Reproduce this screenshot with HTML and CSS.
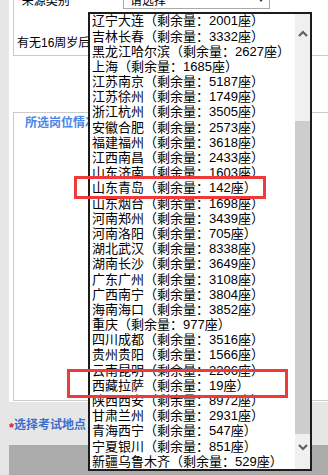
FILE: index.html
```html
<!DOCTYPE html>
<html lang="zh-CN">
<head>
  <meta charset="UTF-8" />
  <meta name="viewport" content="width=device-width, initial-scale=1.0"/>
  <title>报名 - 选择考试地点</title>
  <link rel="stylesheet" href="styles.css">
</head>
<body>

  <div class="page">
    <div class="form-area">
      <div class="panel panel-basic">
        <div class="row-source">
          <span class="label"><i class="req">*</i>来源类别</span>
          <div class="fake-select">
            <span>请选择</span>
            <svg class="caret" width="6" height="4" viewBox="0 0 6 4"><polygon points="0,0 6,0 3,4" fill="#333"/></svg>
          </div>
        </div>
        <div class="row-age">有无16周岁后</div>
      </div>

      <div class="panel panel-post">
        <div class="panel-title">所选岗位情况</div>
      </div>
    </div>

    <div class="section-title"><i class="req">*</i>选择考试地点</div>
    <div class="gray-block"></div>
  </div>

  <!-- opened dropdown of exam cities -->
  <div class="city-list">
    <div class="city-items">
      <div class="city-items-inner">
        <div class="city">辽宁大连（剩余量：2001座）</div>
        <div class="city">吉林长春（剩余量：3332座）</div>
        <div class="city">黑龙江哈尔滨（剩余量：2627座）</div>
        <div class="city">上海（剩余量：1685座）</div>
        <div class="city">江苏南京（剩余量：5187座）</div>
        <div class="city">江苏徐州（剩余量：1749座）</div>
        <div class="city">浙江杭州（剩余量：3505座）</div>
        <div class="city">安徽合肥（剩余量：2573座）</div>
        <div class="city">福建福州（剩余量：3618座）</div>
        <div class="city">江西南昌（剩余量：2433座）</div>
        <div class="city">山东济南（剩余量：1603座）</div>
        <div class="city">山东青岛（剩余量：142座）</div>
        <div class="city">山东烟台（剩余量：1698座）</div>
        <div class="city">河南郑州（剩余量：3439座）</div>
        <div class="city">河南洛阳（剩余量：705座）</div>
        <div class="city">湖北武汉（剩余量：8338座）</div>
        <div class="city">湖南长沙（剩余量：3649座）</div>
        <div class="city">广东广州（剩余量：3108座）</div>
        <div class="city">广西南宁（剩余量：3804座）</div>
        <div class="city">海南海口（剩余量：3852座）</div>
        <div class="city">重庆（剩余量：977座）</div>
        <div class="city">四川成都（剩余量：3516座）</div>
        <div class="city">贵州贵阳（剩余量：1566座）</div>
        <div class="city">云南昆明（剩余量：2206座）</div>
        <div class="city">西藏拉萨（剩余量：19座）</div>
        <div class="city">陕西西安（剩余量：8972座）</div>
        <div class="city">甘肃兰州（剩余量：2931座）</div>
        <div class="city">青海西宁（剩余量：547座）</div>
        <div class="city">宁夏银川（剩余量：851座）</div>
        <div class="city">新疆乌鲁木齐（剩余量：529座）</div>
      </div>
    </div>
    <div class="scrollbar">
      <div class="sb-up">
        <svg width="10" height="7" viewBox="0 0 10 7"><polyline points="1,6 5,2 9,6" fill="none" stroke="#606060" stroke-width="2.2"/></svg>
      </div>
      <div class="sb-gap"></div>
      <div class="sb-thumb"></div>
      <div class="sb-down">
        <svg width="10" height="7" viewBox="0 0 10 7"><polyline points="1,1 5,5 9,1" fill="none" stroke="#606060" stroke-width="2.2"/></svg>
      </div>
    </div>
  </div>

  <!-- red highlight marks -->
  <div class="mark mark-qingdao"></div>
  <div class="mark mark-lasa"></div>

</body>
</html>
```

FILE: styles.css
```css
body {
  margin: 0;
  height: 475px;
  overflow: hidden;
  background-color: #e6e6e6;
  color: #000;
  font-family: "Liberation Sans", "Noto Sans CJK SC", sans-serif;
  font-size: 12px;
}

.page {
  width: 319px;
  margin-left: 9px;
  margin-top: -20px;
  overflow: hidden;
}

.form-area {
  width: 400px;
  background-color: #fff;
  padding: 0 0 1px 4px;
}

.panel {
  border: 1px solid #ccc;
}

.panel-basic {
  padding-left: 3px;
}

.row-source {
  display: flex;
  align-items: center;
  height: 37px;
}

.label {
  width: 106px;
  white-space: nowrap;
}

.req {
  font-style: normal;
  color: #f0306a;
}

.fake-select {
  box-sizing: border-box;
  width: 147px;
  height: 18px;
  border: 1px solid #a9a9a9;
  display: flex;
  align-items: center;
  justify-content: space-between;
  padding: 0 5px 0 6px;
}

.caret {
  display: block;
}

.row-age {
  box-sizing: border-box;
  height: 37px;
  padding-top: 17px;
  line-height: 16px;
  white-space: nowrap;
}

.panel-post {
  margin-top: 56px;
  height: 287px;
}

.panel-title {
  padding: 2px 0 0 11px;
  line-height: 16px;
  font-weight: bold;
  color: #4a86e8;
  white-space: nowrap;
}

.section-title {
  padding-top: 15px;
  line-height: 16px;
  font-weight: bold;
  color: #3d6fce;
  white-space: nowrap;
}

.section-title .req {
  color: #e8141e;
  vertical-align: -3px;
  font-size: 13px;
}

.gray-block {
  margin-top: 9px;
  height: 40px;
  background-color: #ababab;
}

/* dropdown */
.city-list {
  position: absolute;
  left: 88px;
  top: 12px;
  width: 224px;
  height: 459px;
  box-sizing: border-box;
  border: 2px solid #1c1c1c;
  background-color: #fff;
  display: flex;
}

.city-items {
  flex: 1;
  overflow: hidden;
  font-size: 13px;
}

.city-items-inner {
  margin-top: -0.7px;
}

.city {
  height: 15.2px;
  line-height: 15.2px;
  padding-left: 2px;
  white-space: nowrap;
}

.scrollbar {
  width: 15px;
  background-color: #f0f0f0;
  display: flex;
  flex-direction: column;
}

.sb-up,
.sb-down {
  display: flex;
  align-items: center;
  justify-content: center;
}

.sb-up {
  height: 39px;
}

.sb-gap {
  height: 68px;
}

.sb-thumb {
  height: 313px;
  background-color: #cdcdcd;
}

.sb-down {
  height: 26px;
}

.mark {
  position: absolute;
  box-sizing: border-box;
  border: 3px solid #f03a3a;
}

.mark-qingdao {
  left: 74px;
  top: 176px;
  width: 192px;
  height: 23px;
}

.mark-lasa {
  left: 67px;
  top: 369px;
  width: 221px;
  height: 29px;
}
```
